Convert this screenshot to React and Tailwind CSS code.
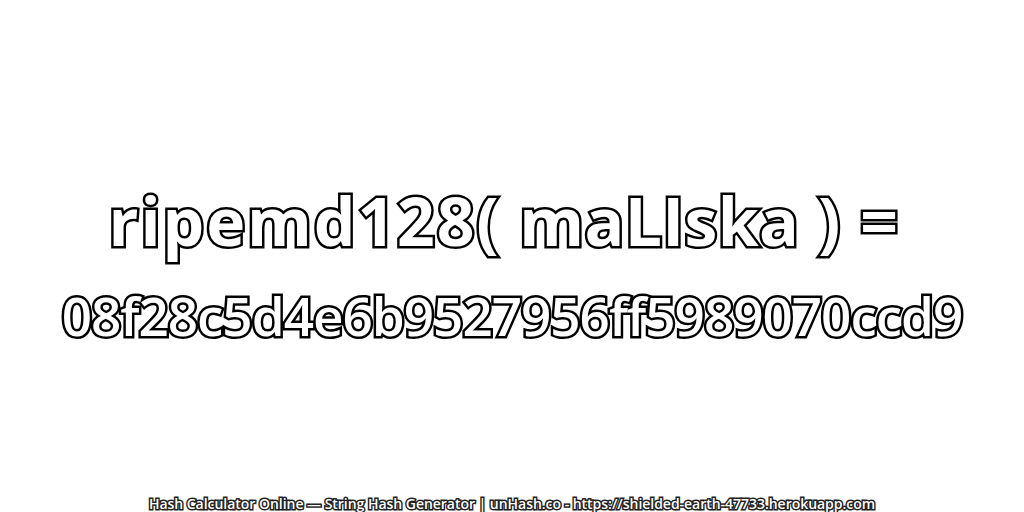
const outline = "[-webkit-text-stroke:5px_#000] [paint-order:stroke_fill] text-white"

export default function App() {
    return (
        <div className="w-[1024px] h-[512px] bg-white flex flex-col items-center overflow-hidden font-['Open_Sans',sans-serif]">
            <div className={"mt-[181px] pr-[16px] h-[78px] leading-[78px] text-[66px] font-bold tracking-[1.4px] whitespace-pre " + outline}>
                <span className="tracking-[1.9px]">ripemd128(</span> <span className="tracking-[0.4px]">maLIska</span> ) =
            </div>
            <div className={"mt-[25px] h-[64px] leading-[64px] text-[53px] font-semibold tracking-[-1px] whitespace-pre " + outline}>08f28c5d4e6b9527956ff5989070ccd9</div>
            <div className="mt-auto h-[16px] leading-[16px] text-[14px] font-semibold tracking-[-0.03px] whitespace-pre text-white [-webkit-text-stroke:3px_#222] [paint-order:stroke_fill]">Hash Calculator Online — String Hash Generator | unHash.co - https://shielded-earth-47733.herokuapp.com</div>
        </div>
    )
}
